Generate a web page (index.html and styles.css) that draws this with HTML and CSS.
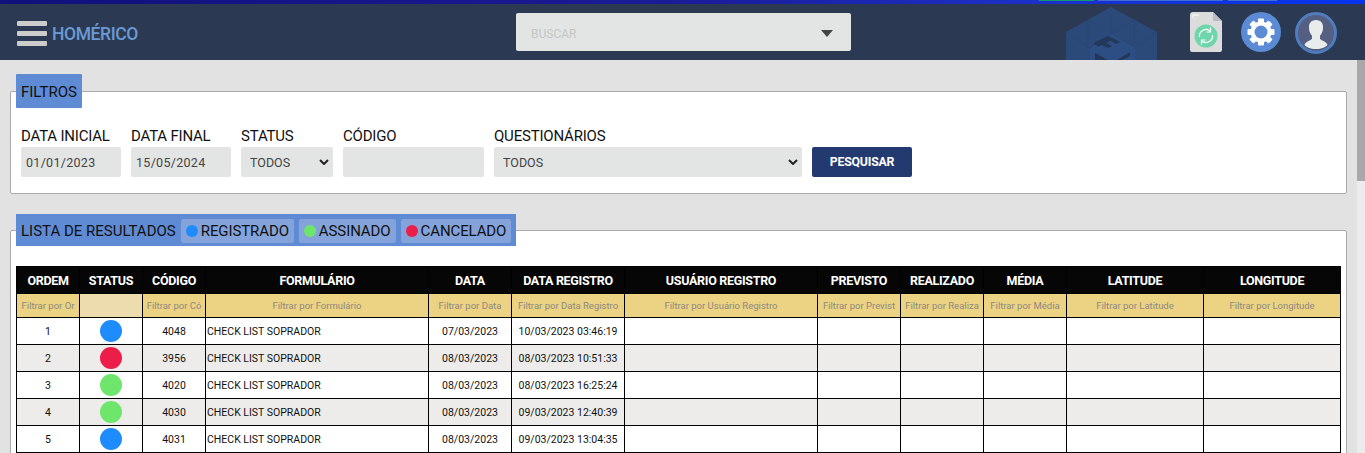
FILE: index.html
```html
<!DOCTYPE html>
<html lang="pt-BR">
<head>
<meta charset="utf-8">
<title>Homérico</title>
<link rel="stylesheet" href="styles.css">
</head>
<body>
<div class="topline">
  <span class="seg seg-green"></span><span class="seg seg-a"></span><span class="seg seg-b"></span>
</div>
<header class="navbar">
  <div class="brand">
    <div class="burger"><i></i><i></i><i></i></div>
    <span class="brand-name">HOMÉRICO</span>
  </div>
  <div class="search"><span class="search-ph">BUSCAR</span><span class="caret"></span></div>
  <svg class="watermark" viewBox="0 0 92 53" width="92" height="53">
    <path d="M46 0 L92 25 V53 H1 V25 Z" fill="#2b4a7a"/>
    <path d="M46 26 L70 40 L70 53 H25 V41 Z" fill="#2d4e82"/>
    <path d="M46 0 V26 M1 25 L25 41 L46 26 L70 40 L92 25 M23 13 L46 26 M69 13 L46 26 M23 13 V41 M69 13 V40" stroke="#2a4674" stroke-width="1" fill="none"/>
    <path d="M28.300 36.300 L43.300 29 L55 34.700 L51 37 L46 33.700 L41 36 L47 39 L43 41 L37 38 L33.300 39.500 Z" fill="#22375a"/>
    <path d="M30 46 L43 53 H30 Z M65 45 V49 L57 53 H52 Z" fill="#22375a"/>
  </svg>
  <div class="nav-icons">
    <svg class="ico-file" viewBox="0 0 32 40" width="32" height="40">
      <path d="M3 0 H23 L32 9 V38 a2 2 0 0 1 -2 2 H2 a2 2 0 0 1 -2 -2 V3 a3 3 0 0 1 3 -3 Z" fill="#dcdcdc"/>
      <path d="M23 0 L32 9 H23 Z" fill="#b9bcc0"/>
      <path d="M3 6 V3 H9" stroke="#f2f2f2" stroke-width="1.4" fill="none"/>
      <circle cx="16" cy="24" r="11.5" fill="#6fd6ac"/>
      <path d="M9.500 25 a6.500 6.500 0 0 1 10.500 -6 M22.500 23 a6.500 6.500 0 0 1 -10.500 6" stroke="#fff" stroke-width="1.200" fill="none"/>
      <path d="M20.500 15.500 V20 H16.500 M11.500 32.500 V28 H15.500" stroke="#fff" stroke-width="1.200" fill="none"/>
    </svg>
    <svg class="ico-gear" viewBox="0 0 40 40" width="40" height="40">
      <circle cx="20" cy="20" r="20" fill="#5b8bd5"/>
      <g fill="#fff">
        <rect x="17" y="6.500" width="6" height="27" rx="1"/>
        <rect x="17" y="6.500" width="6" height="27" rx="1" transform="rotate(45 20 20)"/>
        <rect x="17" y="6.500" width="6" height="27" rx="1" transform="rotate(90 20 20)"/>
        <rect x="17" y="6.500" width="6" height="27" rx="1" transform="rotate(135 20 20)"/>
        <circle cx="20" cy="20" r="10.500"/>
      </g>
      <circle cx="20" cy="20" r="6.500" fill="#5b8bd5"/>
    </svg>
    <svg class="ico-user" viewBox="0 0 42 42" width="42" height="42">
      <circle cx="21" cy="21" r="19.500" fill="#545f82" stroke="#4f7dbf" stroke-width="3"/>
      <path d="M21 8 c-5 0 -7.500 3.500 -7 8.500 c.3 3 1.300 5.500 3 7.200 v3 c-1 1.600 -6 2.600 -7.500 6 c1 2 6 4.300 11.500 4.300 s10.500 -2.300 11.500 -4.300 c-1.500 -3.400 -6.500 -4.400 -7.500 -6 v-3 c1.700 -1.700 2.700 -4.200 3 -7.200 c.5 -5 -2 -8.500 -7 -8.500 Z" fill="#e8ecec"/>
    </svg>
  </div>
</header>
<main class="content">
  <section class="panel panel-filters">
    <h2 class="legend">FILTROS</h2>
    <form class="filters">
      <label class="field f-date"><span>DATA INICIAL</span><div class="ctl ctl-date">01/01/2023</div></label>
      <label class="field f-date"><span>DATA FINAL</span><div class="ctl ctl-date">15/05/2024</div></label>
      <label class="field f-status"><span>STATUS</span><div class="ctl ctl-sel">TODOS<svg class="chev" viewBox="0 0 10 6" width="10" height="6"><path d="M1 1 L5 5 L9 1" stroke="#222" stroke-width="2" fill="none"/></svg></div></label>
      <label class="field f-code"><span>CÓDIGO</span><div class="ctl"></div></label>
      <label class="field f-quest"><span>QUESTIONÁRIOS</span><div class="ctl ctl-sel">TODOS<svg class="chev" viewBox="0 0 10 6" width="10" height="6"><path d="M1 1 L5 5 L9 1" stroke="#222" stroke-width="2" fill="none"/></svg></div></label>
      <button class="btn" type="button">PESQUISAR</button>
    </form>
  </section>
  <section class="panel panel-results">
    <h2 class="legend legend-results">LISTA DE RESULTADOS
      <span class="chip"><i class="dot blue"></i>REGISTRADO</span>
      <span class="chip"><i class="dot green"></i>ASSINADO</span>
      <span class="chip"><i class="dot red"></i>CANCELADO</span>
    </h2>
    <table class="grid">
      <colgroup>
        <col class="c1"><col class="c2"><col class="c3"><col class="c4"><col class="c5"><col class="c6"><col class="c7"><col class="c8"><col class="c9"><col class="c10"><col class="c11"><col class="c12">
      </colgroup>
      <thead>
        <tr class="head"><th>ORDEM</th><th>STATUS</th><th>CÓDIGO</th><th>FORMULÁRIO</th><th>DATA</th><th>DATA REGISTRO</th><th>USUÁRIO REGISTRO</th><th>PREVISTO</th><th>REALIZADO</th><th>MÉDIA</th><th>LATITUDE</th><th>LONGITUDE</th></tr>
        <tr class="flt"><td>Filtrar por Or</td><td class="flt-off"></td><td>Filtrar por Có</td><td>Filtrar por Formulário</td><td>Filtrar por Data</td><td>Filtrar por Data Registro</td><td>Filtrar por Usuário Registro</td><td>Filtrar por Previst</td><td>Filtrar por Realiza</td><td>Filtrar por Média</td><td>Filtrar por Latitude</td><td>Filtrar por Longitude</td></tr>
      </thead>
      <tbody>
        <tr><td>1</td><td><i class="ball blue"></i></td><td>4048</td><td class="left">CHECK LIST SOPRADOR</td><td>07/03/2023</td><td>10/03/2023 03:46:19</td><td></td><td></td><td></td><td></td><td></td><td></td></tr>
        <tr><td>2</td><td><i class="ball red"></i></td><td>3956</td><td class="left">CHECK LIST SOPRADOR</td><td>08/03/2023</td><td>08/03/2023 10:51:33</td><td></td><td></td><td></td><td></td><td></td><td></td></tr>
        <tr><td>3</td><td><i class="ball green"></i></td><td>4020</td><td class="left">CHECK LIST SOPRADOR</td><td>08/03/2023</td><td>08/03/2023 16:25:24</td><td></td><td></td><td></td><td></td><td></td><td></td></tr>
        <tr><td>4</td><td><i class="ball green"></i></td><td>4030</td><td class="left">CHECK LIST SOPRADOR</td><td>08/03/2023</td><td>09/03/2023 12:40:39</td><td></td><td></td><td></td><td></td><td></td><td></td></tr>
        <tr><td>5</td><td><i class="ball blue"></i></td><td>4031</td><td class="left">CHECK LIST SOPRADOR</td><td>08/03/2023</td><td>09/03/2023 13:04:35</td><td></td><td></td><td></td><td></td><td></td><td></td></tr>
      </tbody>
    </table>
  </section>
</main>
<div class="scrollbar"><div class="thumb"></div></div>
</body>
</html>
```
FILE: styles.css
```css
* { box-sizing: border-box; }
html, body { margin: 0; height: 453px; overflow: hidden; }
body { background: #e2e2e2; font-family: "Roboto", "Liberation Sans", sans-serif; color: #111; position: relative; }
.topline { height: 4px; background: linear-gradient(90deg, #12107a 0%, #1a1c98 50%, #1c30c8 75%, #0535f0 100%); position: relative; }
.seg { position: absolute; top: 0; height: 1px; }
.seg-green { left: 1039px; width: 55px; background: #129a6a; }
.seg-a { left: 1098px; width: 125px; background: #3f6fd0; }
.seg-b { left: 1228px; width: 49px; background: #3f6fd0; }
.navbar { height: 56px; background: #2b3a52; display: flex; align-items: center; position: relative; overflow: hidden; }
.brand { display: flex; align-items: center; margin: 3px 0 0 17px; width: 499px; }
.burger { width: 30px; display: flex; flex-direction: column; gap: 5px; }
.burger i { display: block; height: 5px; background: #ccc; border-radius: 1px; }
.brand-name { margin-left: 5px; font-size: 17.5px; font-weight: 500; color: #6b9bd6; letter-spacing: -.4px; }
.search { width: 335px; height: 38px; background: #e3e5e4; border-radius: 2px; display: flex; align-items: center; justify-content: space-between; padding: 4px 18px 0 15px; }
.search-ph { font-size: 12px; color: #c4c6c6; }
.caret { border: 6px solid transparent; border-top: 7px solid #444; border-bottom: 0; margin-top: -1px; }
.watermark { position: absolute; left: 1065px; top: 3px; }
.nav-icons { margin-left: auto; margin-right: 28px; display: flex; align-items: center; }
.ico-file { margin-right: 19px; }
.ico-gear { margin-right: 14px; }
.ico-user { margin-top: 2px; }
.content { padding: 31px 10px 0 10px; width: 1357px; }
.panel { background: #fff; border: 1px solid #aaa; border-radius: 2px; position: relative; }
.panel-filters { height: 103px; padding: 34px 10px 0; }
.panel-results { margin-top: 36px; height: 300px; padding: 35px 5px 0; }
.legend { position: absolute; left: 5px; margin: 0; background: #5e8bd4; font-weight: 400; color: #111; font-size: 15px; display: flex; align-items: center; padding-top: 1px; }
.panel-filters .legend { top: -18px; height: 34px; width: 66px; padding-left: 5px; border-radius: 1px; }
.legend-results { top: -17px; height: 32px; width: 500px; padding-left: 5px; gap: 5px; white-space: nowrap; }
.chip { height: 24px; padding: 0 5px; background: #83a3da; border-radius: 2px; display: inline-flex; align-items: center; letter-spacing: -.1px; }
.dot { width: 12px; height: 12px; border-radius: 50%; margin-right: 3px; }
.blue { background: #1e8cfc; }
.green { background: #6de66b; }
.red { background: #ec1d48; }
.filters { display: flex; align-items: flex-end; gap: 10px; }
.field { display: block; font-size: 15px; letter-spacing: -.2px; }
.field span { display: block; height: 20px; line-height: 20px; margin-bottom: 1px; white-space: nowrap; }
.ctl { height: 30px; background: #e3e5e4; border-radius: 2px; font-size: 12.5px; color: #444; display: flex; align-items: center; padding: 0 5px; letter-spacing: 0; position: relative; }
.ctl-date { letter-spacing: .3px; }
.ctl-sel { padding-left: 9px; }
.chev { position: absolute; right: 4px; top: 12px; }
.f-date { width: 100px; }
.f-status { width: 92px; }
.f-code { width: 141px; }
.f-quest { width: 308px; }
.btn { height: 30px; width: 100px; border: 0; border-radius: 2px; background: #223a70; color: #fff; font: 700 12.3px "Roboto", "Liberation Sans", sans-serif; letter-spacing: -.2px; }
.grid { border-collapse: collapse; table-layout: fixed; width: 1325px; }
.c1 { width: 63px; } .c2 { width: 63px; } .c3 { width: 63px; } .c4 { width: 223px; } .c5 { width: 83px; } .c6 { width: 113px; } .c7 { width: 193px; } .c8 { width: 83px; } .c9 { width: 83px; } .c10 { width: 83px; } .c11 { width: 137px; } .c12 { width: 137px; }
.grid th, .grid td { border: 1px solid #000; padding: 0; text-align: center; overflow: hidden; white-space: nowrap; }
.head th { height: 27px; background: #060606; color: #fff; font-size: 12.5px; font-weight: 700; letter-spacing: -.3px; }
.flt td { height: 24px; background: #ecd283; color: #8c8a80; font-size: 9.5px; }
.flt td.flt-off { background: #eddcae; }
tbody td { height: 27px; font-size: 10.5px; color: #111; }
tbody tr:nth-child(even) td { background: #edecea; }
tbody td.left { text-align: left; padding-left: 1px; }
.ball { display: block; width: 22px; height: 22px; border-radius: 50%; margin: 0 auto; }
.scrollbar { position: absolute; right: 0; top: 60px; width: 8px; height: 393px; background: #ececec; }
.thumb { height: 121px; background: #a8a8a8; }
```
